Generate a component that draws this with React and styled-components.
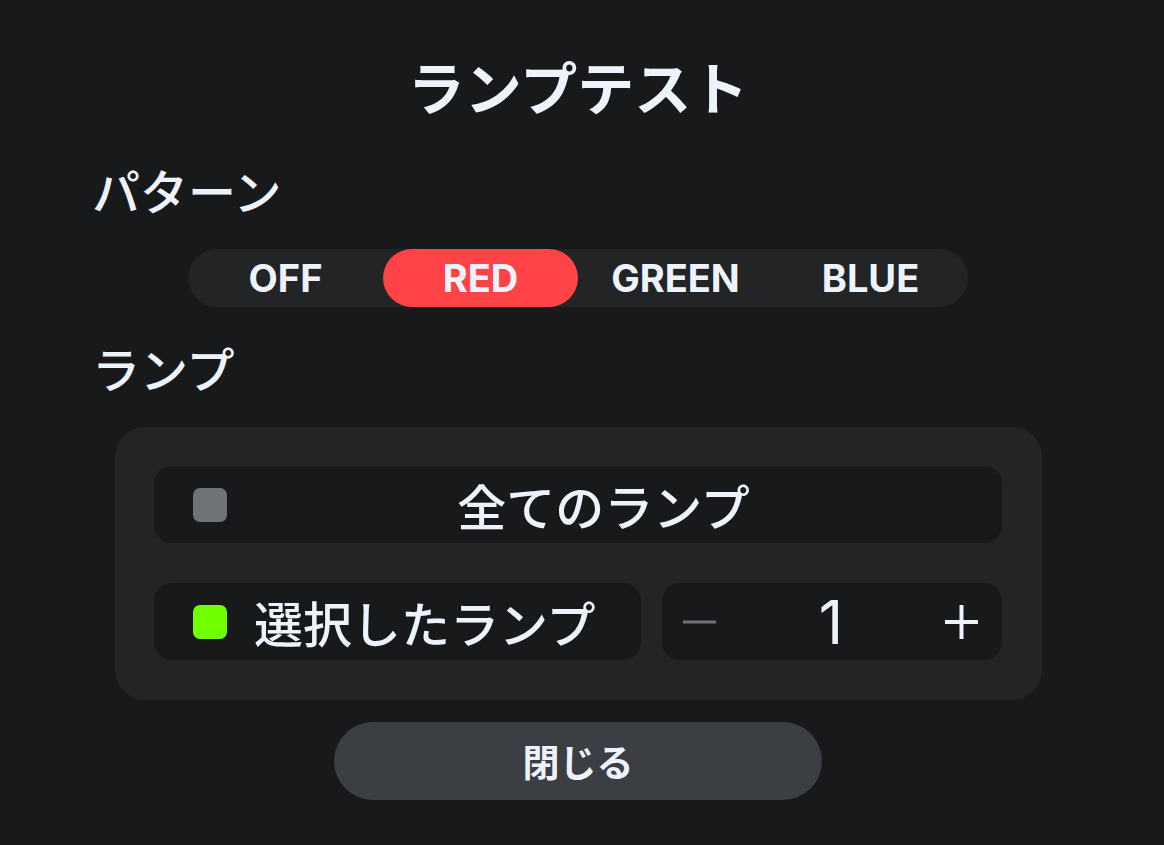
import React, { useState } from "react";
import styled, { createGlobalStyle } from "styled-components";

const GlobalStyle = createGlobalStyle`
  html, body {
    margin: 0;
    padding: 0;
    background: #18191b;
  }
  * {
    box-sizing: border-box;
  }
`;

const jp = `"Noto Sans CJK JP", "Noto Sans", sans-serif`;
const latin = `Inter, "Noto Sans CJK JP", sans-serif`;

const Modal = styled.div`
  width: 1164px;
  height: 845px;
  background: #18191b;
  color: #eef3fb;
  font-family: ${jp};
  padding: 51px 8px 0 0;
  display: flex;
  flex-direction: column;
`;

const Title = styled.h1`
  margin: 0;
  font-size: 57px;
  line-height: 68px;
  font-weight: 700;
  text-align: center;
`;

const Label = styled.h2`
  margin: ${(p) => p.$top}px 0 0 92px;
  font-size: 48px;
  line-height: 60px;
  font-weight: 500;
`;

const Segmented = styled.div`
  margin: 30px auto 0;
  width: 780px;
  height: 58px;
  border-radius: 29px;
  background: #222426;
  display: flex;
`;

const Segment = styled.button`
  flex: 1;
  border: none;
  border-radius: 29px;
  background: ${(p) => (p.$active ? "#ff4347" : "transparent")};
  color: #eef3fb;
  font-family: ${latin};
  font-size: 38px;
  font-weight: 700;
  cursor: pointer;
  padding: 0;
`;

const Panel = styled.div`
  margin: 30px 0 0 115px;
  width: 927px;
  height: 273px;
  border-radius: 30px;
  background: #222426;
  padding: 39px 40px 39px 39px;
  display: flex;
  flex-direction: column;
  gap: 40px;
`;

const Row = styled.div`
  display: flex;
  gap: 21px;
`;

const Cell = styled.div`
  flex: ${(p) => (p.$fixed ? "0 0 340px" : "1")};
  height: 77px;
  border-radius: 18px;
  background: #18191b;
  display: flex;
  align-items: center;
  padding: ${(p) => (p.$fixed ? "0 23px 0 21px" : "0 39px")};
  gap: 27px;
  justify-content: ${(p) => (p.$fixed ? "space-between" : "flex-start")};
`;

const Check = styled.span`
  flex: 0 0 34px;
  width: 34px;
  height: 34px;
  border-radius: 7px;
  background: ${(p) => (p.$on ? "#72ff00" : "#6f7277")};
`;

const CellText = styled.span`
  font-size: 49px;
  line-height: 60px;
  font-weight: 500;
  flex: ${(p) => (p.$center ? "1" : "0 1 auto")};
  text-align: ${(p) => (p.$center ? "center" : "left")};
  margin-left: ${(p) => (p.$center ? "-10px" : "0")};
`;

const StepButton = styled.button`
  border: none;
  background: transparent;
  padding: 0;
  width: 34px;
  height: 34px;
  display: flex;
  align-items: center;
  justify-content: center;
  color: ${(p) => (p.$disabled ? "#6f7277" : "#eef3fb")};
  cursor: pointer;
`;

const Count = styled.span`
  font-family: ${latin};
  font-size: 60px;
  line-height: 60px;
  font-weight: 400;
`;

const CloseButton = styled.button`
  margin: 22px 0 0 334px;
  width: 488px;
  height: 78px;
  border: none;
  border-radius: 39px;
  background: #3b3e42;
  color: #eef3fb;
  font-family: ${jp};
  font-size: 37px;
  font-weight: 700;
  cursor: pointer;
`;

const MinusIcon = () => (
  <svg width="34" height="34" viewBox="0 0 34 34">
    <line x1="0" y1="17" x2="33" y2="17" stroke="currentColor" strokeWidth="3" />
  </svg>
);

const PlusIcon = () => (
  <svg width="34" height="34" viewBox="0 0 34 34">
    <line x1="0" y1="17" x2="33" y2="17" stroke="currentColor" strokeWidth="4" />
    <line x1="16.5" y1="0" x2="16.5" y2="34" stroke="currentColor" strokeWidth="4" />
  </svg>
);

const patterns = ["OFF", "RED", "GREEN", "BLUE"];

export default function App() {
  const [pattern, setPattern] = useState("RED");
  const [count, setCount] = useState(1);

  return (
    <>
      <GlobalStyle />
      <Modal>
        <Title>ランプテスト</Title>
        <Label $top={40}>パターン</Label>
        <Segmented>
          {patterns.map((p) => (
            <Segment key={p} $active={p === pattern} onClick={() => setPattern(p)}>
              {p}
            </Segment>
          ))}
        </Segmented>
        <Label $top={30}>ランプ</Label>
        <Panel>
          <Row>
            <Cell>
              <Check />
              <CellText $center>全てのランプ</CellText>
            </Cell>
          </Row>
          <Row>
            <Cell>
              <Check $on />
              <CellText>選択したランプ</CellText>
            </Cell>
            <Cell $fixed>
              <StepButton $disabled={count <= 1} onClick={() => setCount(Math.max(1, count - 1))}>
                <MinusIcon />
              </StepButton>
              <Count>{count}</Count>
              <StepButton onClick={() => setCount(count + 1)}>
                <PlusIcon />
              </StepButton>
            </Cell>
          </Row>
        </Panel>
        <CloseButton>閉じる</CloseButton>
      </Modal>
    </>
  );
}
